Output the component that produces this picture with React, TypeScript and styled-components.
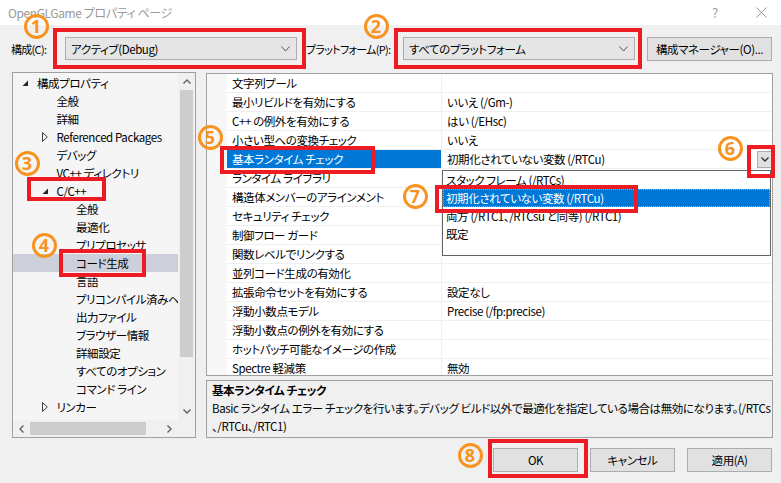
import styled, { createGlobalStyle } from 'styled-components'

const GlobalStyle = createGlobalStyle`
  html, body {
    margin: 0;
    padding: 0;
    background: #f0f0f0;
  }
  body {
    font-family: "Noto Sans CJK JP", "Noto Sans", sans-serif;
    font-size: 11.5px;
    letter-spacing: -0.4px;
    color: #000;
    font-feature-settings: "palt";
  }
  * {
    box-sizing: border-box;
  }
`

const Window = styled.div`
  position: relative;
  width: 781px;
  height: 483px;
  overflow: hidden;
  display: flex;
  flex-direction: column;
  background: #f0f0f0;
`

const TitleBar = styled.div`
  height: 25px;
  flex-shrink: 0;
  display: flex;
  align-items: center;
  background: #fff;
  color: #999;
  padding-left: 8px;
`

const Title = styled.div`
  flex: 1;
  font-size: 12px;
`

const CaptionButton = styled.div<{ $w: number }>`
  width: ${({ $w }) => $w}px;
  height: 25px;
  display: flex;
  align-items: center;
  justify-content: center;
  color: #999;
  font-size: 13px;
`

const TopRow = styled.div`
  height: 23px;
  margin: 12px 9px 0 11px;
  display: flex;
  align-items: center;
`

const Label = styled.div<{ $w: number; $ml?: number }>`
  width: ${({ $w }) => $w}px;
  margin-left: ${({ $ml }) => $ml ?? 0}px;
  white-space: nowrap;
  font-size: 11px;
  letter-spacing: -0.7px;
`

const Combo = styled.div`
  width: 232px;
  height: 23px;
  display: flex;
  align-items: center;
  justify-content: space-between;
  padding: 0 6px 0 5px;
  background: #e5e5e5;
  border: 1px solid #adadad;
`

const Button = styled.div<{ $w: number; $ml?: number }>`
  width: ${({ $w }) => $w}px;
  height: 24px;
  margin-left: ${({ $ml }) => $ml ?? 0}px;
  display: flex;
  align-items: center;
  justify-content: center;
  background: #e1e1e1;
  border: 1px solid #adadad;
  white-space: nowrap;
`

const Main = styled.div`
  height: 366px;
  margin: 12px 8px 0 12px;
  display: flex;
  gap: 10px;
`

const TreePanel = styled.div`
  width: 185px;
  height: 366px;
  border: 1px solid #a0a0a0;
  background: #f5f5f5;
  display: grid;
  grid-template-columns: 1fr 17px;
  grid-template-rows: 1fr 17px;
`

const TreeContent = styled.div`
  overflow: hidden;
  padding-top: 1px;
`

const TreeRow = styled.div<{ $level: number; $selected?: boolean }>`
  height: 18px;
  display: flex;
  align-items: center;
  white-space: nowrap;
  padding-left: ${({ $level }) => 4 + $level * 19.5}px;
  background: ${({ $selected }) => ($selected ? '#cdd0da' : 'transparent')};
`

const Expander = styled.span`
  width: 20px;
  height: 18px;
  flex-shrink: 0;
  display: flex;
  align-items: center;
  padding-left: 5px;
`

const VScroll = styled.div`
  display: flex;
  flex-direction: column;
  background: #f0f0f0;
`

const HScroll = styled.div`
  display: flex;
  background: #f0f0f0;
`

const ScrollArrow = styled.div`
  width: 17px;
  height: 17px;
  flex-shrink: 0;
  display: flex;
  align-items: center;
  justify-content: center;
`

const ScrollTrack = styled.div`
  flex: 1;
`

const VThumb = styled.div<{ $len: number }>`
  height: ${({ $len }) => $len}px;
  margin: 0 2px;
  background: #cdcdcd;
`

const HThumb = styled.div<{ $len: number }>`
  width: ${({ $len }) => $len}px;
  margin: 2px 0;
  background: #cdcdcd;
`

const Corner = styled.div`
  background: #f0f0f0;
`

const RightColumn = styled.div`
  width: 567px;
  margin-top: 1px;
  display: flex;
  flex-direction: column;
  gap: 4px;
`

const Grid = styled.div`
  position: relative;
  height: 303px;
  border: 1px solid #a0a0a0;
  background: #fff;
  overflow: hidden;
`

const GridRow = styled.div`
  height: 19px;
  display: grid;
  grid-template-columns: 20px 215px 1fr;
`

const Gutter = styled.div`
  background: #f7f7f7;
`

const NameCell = styled.div<{ $selected?: boolean }>`
  display: flex;
  align-items: center;
  padding-left: 5px;
  white-space: nowrap;
  overflow: hidden;
  border-bottom: 1px solid #f0f0f0;
  border-right: 1px solid #f0f0f0;
  background: ${({ $selected }) => ($selected ? '#0078d7' : '#fff')};
  color: ${({ $selected }) => ($selected ? '#fff' : '#000')};
`

const ValueCell = styled.div`
  display: flex;
  align-items: center;
  justify-content: space-between;
  padding-left: 5px;
  white-space: nowrap;
  border-bottom: 1px solid #f0f0f0;
`

const DropButton = styled.div`
  width: 15px;
  height: 17px;
  display: flex;
  align-items: center;
  justify-content: center;
  background: #e1e1e1;
  border: 1px solid #adadad;
`

const DropList = styled.div`
  position: absolute;
  left: 235px;
  top: 96px;
  width: 329px;
  height: 86px;
  background: #fff;
  border: 1px solid #646464;
`

const DropItem = styled.div<{ $selected?: boolean }>`
  height: 18px;
  display: flex;
  align-items: center;
  padding-left: 2px;
  white-space: nowrap;
  background: ${({ $selected }) => ($selected ? '#0078d7' : 'transparent')};
  color: ${({ $selected }) => ($selected ? '#fff' : '#000')};
  border: 1px dotted ${({ $selected }) => ($selected ? '#e0a040' : 'transparent')};
`

const Description = styled.div`
  height: 58px;
  border: 1px solid #a0a0a0;
  padding: 0 5px;
  white-space: nowrap;
  line-height: 18px;
`

const DescTitle = styled.div`
  font-weight: 700;
`

const Footer = styled.div`
  margin: 10px 9px 0 0;
  display: flex;
  justify-content: flex-end;
  gap: 12px;
`

const RedBox = styled.div<{ $x: number; $y: number; $w: number; $h: number }>`
  position: absolute;
  left: ${({ $x }) => $x}px;
  top: ${({ $y }) => $y}px;
  width: ${({ $w }) => $w}px;
  height: ${({ $h }) => $h}px;
  border: 4px solid #ed1c24;
  pointer-events: none;
`

const Marker = styled.div<{ $x: number; $y: number }>`
  position: absolute;
  left: ${({ $x }) => $x - 12.5}px;
  top: ${({ $y }) => $y - 12.5}px;
  width: 25px;
  height: 25px;
  border: 3px solid #f7931e;
  border-radius: 50%;
  display: flex;
  align-items: center;
  justify-content: center;
  color: #f7931e;
  font-family: "Noto Sans", "Liberation Sans", sans-serif;
  font-weight: 700;
  font-size: 18px;
  letter-spacing: 0;
  line-height: 1;
`

type Dir = 'down' | 'up' | 'left' | 'right'

const Chevron = ({ dir = 'down', color = '#404040', w = 9 }: { dir?: Dir; color?: string; w?: number }) => {
  const h = Math.round(w / 2) + 1
  if (dir === 'left' || dir === 'right') {
    const d = dir === 'left'
      ? `M${h - 0.5} 0.5 L1 ${w / 2} L${h - 0.5} ${w - 0.5}`
      : `M0.5 0.5 L${h - 1} ${w / 2} L0.5 ${w - 0.5}`
    return (
      <svg width={h} height={w} viewBox={`0 0 ${h} ${w}`}>
        <path d={d} fill="none" stroke={color} strokeWidth={1.4} />
      </svg>
    )
  }
  const d = dir === 'down'
    ? `M0.5 0.5 L${w / 2} ${h - 1} L${w - 0.5} 0.5`
    : `M0.5 ${h - 0.5} L${w / 2} 1 L${w - 0.5} ${h - 0.5}`
  return (
    <svg width={w} height={h} viewBox={`0 0 ${w} ${h}`}>
      <path d={d} fill="none" stroke={color} strokeWidth={dir === 'down' && w > 8 ? 1 : 1.4} />
    </svg>
  )
}

const ExpandedIcon = () => (
  <svg width="7" height="7" viewBox="0 0 7 7">
    <polygon points="6,0.5 6,6 0.5,6" fill="#262626" />
  </svg>
)

const CollapsedIcon = () => (
  <svg width="6" height="10" viewBox="0 0 6 10">
    <polygon points="0.5,0.5 5.3,5 0.5,9.5" fill="none" stroke="#404040" strokeWidth="1" />
  </svg>
)

type TreeItem = { label: string; level: number; expander?: 'open' | 'closed'; selected?: boolean }

const treeItems: TreeItem[] = [
  { label: '構成プロパティ', level: 0, expander: 'open' },
  { label: '全般', level: 1 },
  { label: '詳細', level: 1 },
  { label: 'Referenced Packages', level: 1, expander: 'closed' },
  { label: 'デバッグ', level: 1 },
  { label: 'VC++ ディレクトリ', level: 1 },
  { label: 'C/C++', level: 1, expander: 'open' },
  { label: '全般', level: 2 },
  { label: '最適化', level: 2 },
  { label: 'プリプロセッサ', level: 2 },
  { label: 'コード生成', level: 2, selected: true },
  { label: '言語', level: 2 },
  { label: 'プリコンパイル済みヘッダー', level: 2 },
  { label: '出力ファイル', level: 2 },
  { label: 'ブラウザー情報', level: 2 },
  { label: '詳細設定', level: 2 },
  { label: 'すべてのオプション', level: 2 },
  { label: 'コマンド ライン', level: 2 },
  { label: 'リンカー', level: 1, expander: 'closed' },
]

type Property = { name: string; value: string; selected?: boolean }

const properties: Property[] = [
  { name: '文字列プール', value: '' },
  { name: '最小リビルドを有効にする', value: 'いいえ (/Gm-)' },
  { name: 'C++ の例外を有効にする', value: 'はい (/EHsc)' },
  { name: '小さい型への変換チェック', value: 'いいえ' },
  { name: '基本ランタイム チェック', value: '初期化されていない変数 (/RTCu)', selected: true },
  { name: 'ランタイム ライブラリ', value: '' },
  { name: '構造体メンバーのアラインメント', value: '' },
  { name: 'セキュリティ チェック', value: '' },
  { name: '制御フロー ガード', value: '' },
  { name: '関数レベルでリンクする', value: '' },
  { name: '並列コード生成の有効化', value: '' },
  { name: '拡張命令セットを有効にする', value: '設定なし' },
  { name: '浮動小数点モデル', value: 'Precise (/fp:precise)' },
  { name: '浮動小数点の例外を有効にする', value: '' },
  { name: 'ホットパッチ可能なイメージの作成', value: '' },
  { name: 'Spectre 軽減策', value: '無効' },
]

const options = [
  'スタック フレーム (/RTCs)',
  '初期化されていない変数 (/RTCu)',
  '両方 (/RTC1、/RTCsu と同等) (/RTC1)',
  '既定',
]

const boxes = [
  { x: 53, y: 28, w: 253, h: 41 },
  { x: 394, y: 28, w: 248, h: 41 },
  { x: 27, y: 177, w: 79, h: 24 },
  { x: 59, y: 249, w: 87, h: 28 },
  { x: 220, y: 146, w: 155, h: 28 },
  { x: 747, y: 145, w: 28, h: 33 },
  { x: 435, y: 185, w: 203, h: 28 },
  { x: 488, y: 439, w: 100, h: 39 },
]

const markers = [
  { n: 1, x: 36, y: 26 },
  { n: 2, x: 376, y: 26 },
  { n: 3, x: 27, y: 163 },
  { n: 4, x: 44, y: 245 },
  { n: 5, x: 210, y: 137 },
  { n: 6, x: 730, y: 148 },
  { n: 7, x: 415, y: 196 },
  { n: 8, x: 470, y: 455 },
]

const App = (): JSX.Element => {
  return (
    <Window>
      <GlobalStyle />
      <TitleBar>
        <Title>OpenGLGame プロパティ ページ</Title>
        <CaptionButton $w={52}>?</CaptionButton>
        <CaptionButton $w={40}>
          <svg width="11" height="11" viewBox="0 0 11 11">
            <path d="M0.5 0.5 L10.5 10.5 M10.5 0.5 L0.5 10.5" stroke="#999" strokeWidth="1" />
          </svg>
        </CaptionButton>
      </TitleBar>

      <TopRow>
        <Label $w={54}>構成(C):</Label>
        <Combo>
          <span>アクティブ(Debug)</span>
          <Chevron color="#555" />
        </Combo>
        <Label $w={97} $ml={9}>プラットフォーム(P):</Label>
        <Combo>
          <span>すべてのプラットフォーム</span>
          <Chevron color="#555" />
        </Combo>
        <Button $w={125} $ml={12}>構成マネージャー(O)...</Button>
      </TopRow>

      <Main>
        <TreePanel>
          <TreeContent>
            {treeItems.map((item, i) => (
              <TreeRow key={i} $level={item.level} $selected={item.selected}>
                <Expander>
                  {item.expander === 'open' && <ExpandedIcon />}
                  {item.expander === 'closed' && <CollapsedIcon />}
                </Expander>
                {item.label}
              </TreeRow>
            ))}
          </TreeContent>
          <VScroll>
            <ScrollArrow><Chevron dir="up" color="#606060" w={8} /></ScrollArrow>
            <VThumb $len={267} />
            <ScrollTrack />
            <ScrollArrow><Chevron dir="down" color="#606060" w={8} /></ScrollArrow>
          </VScroll>
          <HScroll>
            <ScrollArrow><Chevron dir="left" color="#606060" w={8} /></ScrollArrow>
            <HThumb $len={116} />
            <ScrollTrack />
            <ScrollArrow><Chevron dir="right" color="#606060" w={8} /></ScrollArrow>
          </HScroll>
          <Corner />
        </TreePanel>

        <RightColumn>
          <Grid>
            {properties.map((p, i) => (
              <GridRow key={i}>
                <Gutter />
                <NameCell $selected={p.selected}>{p.name}</NameCell>
                <ValueCell>
                  <span>{p.value}</span>
                  {p.selected && (
                    <DropButton>
                      <Chevron color="#333" w={8} />
                    </DropButton>
                  )}
                </ValueCell>
              </GridRow>
            ))}
            <DropList>
              {options.map((o, i) => (
                <DropItem key={i} $selected={i === 1}>{o}</DropItem>
              ))}
            </DropList>
          </Grid>
          <Description>
            <DescTitle>基本ランタイム チェック</DescTitle>
            <div>Basic ランタイム エラー チェックを行います。デバッグ ビルド以外で最適化を指定している場合は無効になります。(/RTCs</div>
            <div>、/RTCu、/RTC1)</div>
          </Description>
        </RightColumn>
      </Main>

      <Footer>
        <Button $w={85}>OK</Button>
        <Button $w={85}>キャンセル</Button>
        <Button $w={85}>適用(A)</Button>
      </Footer>

      {boxes.map((b, i) => (
        <RedBox key={i} $x={b.x} $y={b.y} $w={b.w} $h={b.h} />
      ))}
      {markers.map((m) => (
        <Marker key={m.n} $x={m.x} $y={m.y}>{m.n}</Marker>
      ))}
    </Window>
  )
}

export default App
